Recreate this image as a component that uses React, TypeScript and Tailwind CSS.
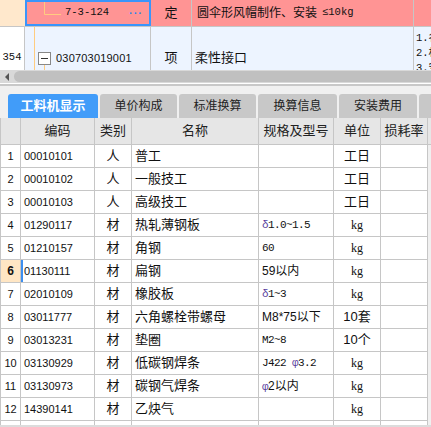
import React from 'react';

const cjk = "font-['Liberation_Sans','Noto_Sans_CJK_SC',sans-serif]";
const mono = "font-['Liberation_Mono','Noto_Sans_CJK_SC',monospace]";

type Row = {
  no: number;
  code: string;
  kind: string;
  name: string;
  spec: string;
  unit: string;
};

const rows: Row[] = [
  { no: 1, code: '00010101', kind: '人', name: '普工', spec: '', unit: '工日' },
  { no: 2, code: '00010102', kind: '人', name: '一般技工', spec: '', unit: '工日' },
  { no: 3, code: '00010103', kind: '人', name: '高级技工', spec: '', unit: '工日' },
  { no: 4, code: '01290117', kind: '材', name: '热轧薄钢板', spec: 'δ1.0~1.5', unit: 'kg' },
  { no: 5, code: '01210157', kind: '材', name: '角钢', spec: '60', unit: 'kg' },
  { no: 6, code: '01130111', kind: '材', name: '扁钢', spec: '59以内', unit: 'kg' },
  { no: 7, code: '02010109', kind: '材', name: '橡胶板', spec: 'δ1~3', unit: 'kg' },
  { no: 8, code: '03011777', kind: '材', name: '六角螺栓带螺母', spec: 'M8*75以下', unit: '10套' },
  { no: 9, code: '03013231', kind: '材', name: '垫圈', spec: 'M2~8', unit: '10个' },
  { no: 10, code: '03130929', kind: '材', name: '低碳钢焊条', spec: 'J422 φ3.2', unit: 'kg' },
  { no: 11, code: '03130973', kind: '材', name: '碳钢气焊条', spec: 'φ2以内', unit: 'kg' },
  { no: 12, code: '14390141', kind: '材', name: '乙炔气', spec: '', unit: 'kg' },
];

const tabs = [
  { label: '工料机显示', w: 'w-[90px]', active: true },
  { label: '单价构成', w: 'w-[77px]' },
  { label: '标准换算', w: 'w-[77px]' },
  { label: '换算信息', w: 'w-[79px]' },
  { label: '安装费用', w: 'w-[78px]' },
  { label: '', w: 'w-[20px]' },
];

const cell = 'h-full border-r border-[#c6c6c6] flex items-center overflow-hidden whitespace-nowrap';

const SpecText = ({ text }: { text: string }) => {
  // δ / φ get the coloured look of the original
  const parts = text.split(/([δφ])/);
  return (
    <span className={`${mono} text-[11px] tracking-[-0.6px] text-[#111]`}>
      {parts.map((p, i) =>
        p === 'δ' || p === 'φ' ? (
          <span key={i} className="text-[#5a3fa0]">{p}</span>
        ) : (
          <span key={i} className={/[\u4e00-\u9fff]/.test(p) ? `${cjk} text-[12px] tracking-normal` : ''}>{p}</span>
        )
      )}
    </span>
  );
};

export default function App() {
  return (
    <div className={`w-[431px] h-[427px] overflow-hidden bg-[#f0f0f0] ${cjk} text-[#111]`}>
      {/* 上部定额列表 */}
      <div className="h-[70px] overflow-hidden bg-white">
        <div className="flex h-[27px] border-b border-[#c6c6c6]">
          <div className="w-[25px] h-full bg-[#ffe8cc]" />
          <div className="relative w-[126px] h-full border-2 border-[#3a95fb] bg-[#ff9494] flex items-center">
            <svg className="absolute left-0 top-0" width="40" height="24">
              <path d="M17.5 0 V12.5 H34" stroke="#ffcc80" strokeWidth="1" fill="none" />
            </svg>
            <span className={`${mono} text-[10.5px] ml-[38px]`}>7-3-124</span>
            <span className="ml-auto mr-[6px] text-[#2f86e8] text-[11px] font-bold tracking-[1px] leading-none">···</span>
          </div>
          <div className="w-[41px] h-full bg-[#ff9494] border-r border-[#c6c6c6] flex items-center justify-center text-[13px]">定</div>
          <div className="w-[222px] h-full bg-[#ff9494] border-r border-[#c6c6c6] flex items-center pl-[5px] text-[12px] whitespace-nowrap">
            圆伞形风帽制作、安装 <span className={`${mono} text-[10.5px] ml-[5px]`}>≤10kg</span>
          </div>
          <div className="flex-1 h-full bg-[#ff9494]" />
        </div>
        <div className="flex h-[62px]">
          <div className="w-[25px] h-full bg-white border-r border-[#c6c6c6] flex items-center justify-center">
            <span className={`${mono} text-[10.5px]`}>354</span>
          </div>
          <div className="relative w-[126px] h-full bg-[#edf4ff] border-r border-[#c6c6c6] flex items-center">
            <svg className="absolute left-0 top-0" width="40" height="62">
              <path d="M9.5 0 V62 M19.5 35 V62" stroke="#ffcc80" strokeWidth="1" fill="none" />
            </svg>
            <div className="relative ml-[13px] w-[13px] h-[13px] border border-[#888] bg-white flex items-center justify-center">
              <div className="w-[7px] h-px bg-[#333]" />
            </div>
            <span className="ml-[5px] text-[11px] tracking-[0.2px]">030703019001</span>
          </div>
          <div className="w-[41px] h-full bg-[#edf4ff] border-r border-[#c6c6c6] flex items-center justify-center text-[13px]">项</div>
          <div className="w-[222px] h-full bg-[#edf4ff] border-r border-[#c6c6c6] flex items-center pl-[3px] text-[13px]">柔性接口</div>
          <div className={`flex-1 h-full bg-[#edf4ff] pl-[2px] pt-[3px] ${mono} text-[10.5px] leading-[14px] overflow-hidden whitespace-nowrap`}>
            <div>1.<span className={cjk}>名</span></div>
            <div>2.<span className={cjk}>材</span></div>
            <div>3.<span className={cjk}>安</span></div>
          </div>
        </div>
      </div>

      {/* 横向滚动条 */}
      <div className="flex h-[13px] bg-[#d9d9d9] items-center">
        <div className="w-[14px] h-full flex items-center justify-center">
          <div className="w-0 h-0 border-y-[4px] border-y-transparent border-r-[4px] border-r-[#555]" />
        </div>
        <div className="flex-1 h-[11px] rounded-l-[6px] bg-[#c0c0c0]" />
      </div>
      <div className="h-px bg-white" />
      <div className="h-[2px] bg-[#c8c8c8]" />

      {/* 标签页 */}
      <div className="flex items-end gap-[2px] pl-[8px] pt-[8px] h-[32px]">
        {tabs.map((t, i) => (
          <div
            key={i}
            className={`${t.w} shrink-0 h-[24px] rounded-t-[3px] flex items-center justify-center ${
              t.active ? 'bg-[#419cf9] text-white text-[13px] font-bold' : 'bg-[#c8c8c8] text-[#222] text-[12px]'
            }`}
          >
            {t.label}
          </div>
        ))}
      </div>

      {/* 表头 */}
      <div className="flex h-[27px] bg-[#e6e6e6] border-b border-[#c6c6c6] text-[13px] text-[#222]">
        <div className={`${cell} w-[21px] border-l`} />
        <div className={`${cell} w-[74px] justify-center`}>编码</div>
        <div className={`${cell} w-[37px] justify-center`}>类别</div>
        <div className={`${cell} w-[127px] justify-center`}>名称</div>
        <div className={`${cell} w-[75px] justify-center`}>规格及型号</div>
        <div className={`${cell} w-[47px] justify-center`}>单位</div>
        <div className={`${cell} w-[47px] justify-center`}>损耗率</div>
      </div>

      {/* 表体 */}
      <div className="h-[280px] overflow-hidden">
        {[...rows, null].map((r, i) => (
          <div key={i} className="flex h-[23px] bg-white border-b border-[#c6c6c6] w-[428px]">
            <div
              className={`${cell} w-[21px] border-l justify-center text-[11px] ${
                r?.no === 6 ? 'bg-[#ffe6c4] font-bold text-[12px]' : ''
              }`}
            >
              {r?.no}
            </div>
            <div
              className={`${cell} w-[74px] pl-[3px] text-[11px] ${
                r?.no === 6 ? 'shadow-[inset_2px_0_0_#3d8ff0]' : ''
              }`}
            >
              {r?.code}
            </div>
            <div className={`${cell} w-[37px] justify-center text-[13px]`}>{r?.kind}</div>
            <div className={`${cell} w-[127px] pl-[3px] text-[13px]`}>{r?.name}</div>
            <div className={`${cell} w-[75px] pl-[3px]`}>{r && <SpecText text={r.spec} />}</div>
            <div className={`${cell} w-[47px] justify-center ${r?.unit === 'kg' ? "font-['Liberation_Serif'] text-[12px]" : 'text-[13px]'}`}>
              {r?.unit}
            </div>
            <div className={`${cell} w-[47px]`} />
          </div>
        ))}
      </div>
      <div className="h-[2px] bg-[#dcdcdc]" />
    </div>
  );
}
